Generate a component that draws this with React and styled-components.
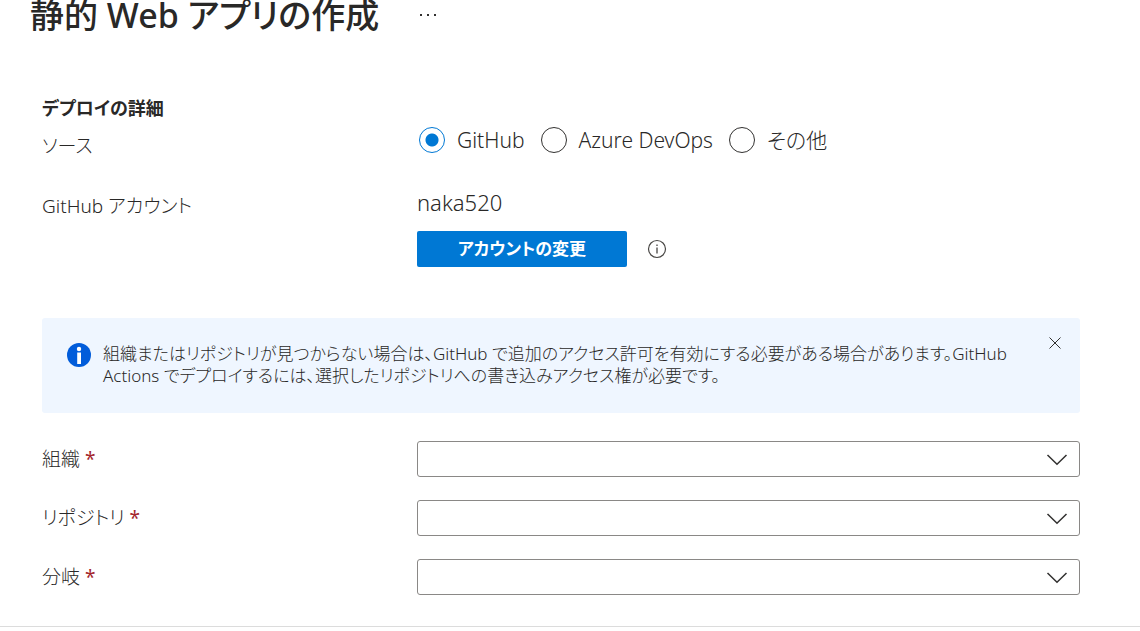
import React, { useState } from 'react';
import styled, { createGlobalStyle } from 'styled-components';

const GlobalStyle = createGlobalStyle`
  * {
    box-sizing: border-box;
  }

  body {
    margin: 0;
    background: #fff;
    color: #292827;
    font-family: "Noto Sans", "Noto Sans CJK JP", sans-serif;
    font-size: 19px;
    font-weight: 300;
    line-height: 28px;
    font-feature-settings: "palt";
  }

  button, select, input {
    font: inherit;
    font-feature-settings: inherit;
    color: inherit;
  }
`;

const Page = styled.main`
  overflow: hidden;
`;

const Header = styled.header`
  display: flex;
  align-items: flex-end;
  gap: 40px;
  height: 39px;
  padding-left: 30px;
`;

const Title = styled.h1`
  margin: 0;
  font-size: 34px;
  font-weight: 500;
  line-height: 48px;
`;

const MoreButton = styled.button`
  display: flex;
  align-items: center;
  height: 48px;
  padding: 0;
  border: 0;
  background: none;
  cursor: pointer;
`;

const Form = styled.form`
  padding: 55px 60px 31px 42px;
  border-bottom: 1px solid #dcdcdc;
`;

const SectionTitle = styled.h2`
  margin: 0;
  font-size: 18px;
  font-weight: 600;
  line-height: 28px;
`;

const Row = styled.div`
  display: grid;
  grid-template-columns: 375px 1fr;
  align-items: start;
`;

const SourceRow = styled(Row)`
  align-items: end;
  height: 42px;
`;

const AccountRow = styled(Row)`
  margin-top: 24px;
`;

const Label = styled.label`
  line-height: 36px;
`;

const RowLabel = styled.span`
  line-height: 36px;
`;

const RadioGroup = styled.div`
  display: flex;
  align-items: center;
  gap: 16px;
  padding: 0 2px 10px;
  font-size: 21px;
`;

const RadioOption = styled.label`
  display: flex;
  align-items: center;
  gap: 12px;
  cursor: pointer;
`;

const Radio = styled.input`
  appearance: none;
  width: 26px;
  height: 26px;
  margin: 0;
  border: 1px solid #323130;
  border-radius: 50%;
  cursor: pointer;

  &:checked {
    border-color: #0078d4;
    background: radial-gradient(circle, #0078d4 6px, transparent 7px);
  }
`;

const AccountName = styled.div`
  font-size: 22px;
`;

const AccountActions = styled.div`
  display: flex;
  align-items: center;
  gap: 20px;
  margin-top: 15px;
`;

const PrimaryButton = styled.button`
  width: 210px;
  height: 36px;
  padding: 0;
  border: 0;
  border-radius: 2px;
  background: #0078d4;
  color: #fff;
  font-size: 17px;
  font-weight: 600;
  cursor: pointer;
`;

const IconButton = styled.button`
  display: flex;
  padding: 0;
  border: 0;
  background: none;
  cursor: pointer;
`;

const MessageBar = styled.div`
  display: flex;
  align-items: flex-start;
  gap: 12px;
  margin-top: 51px;
  padding: 18px 18px 25px 25px;
  border-radius: 3px;
  background: #eff6ff;
`;

const MessageBody = styled.div`
  display: flex;
  flex: 1;
  gap: 12px;
  padding-top: 7px;

  svg {
    flex: none;
  }
`;

const MessageText = styled.p`
  flex: 1;
  min-height: 45px;
  margin: 0;
  padding-right: 20px;
  font-size: 17px;
  line-height: 22px;
`;

const Fields = styled.div`
  display: grid;
  gap: 23px;
  margin-top: 28px;
`;

const Required = styled.span`
  color: #a4262c;
  font-weight: 400;
`;

const SelectBox = styled.div`
  position: relative;

  svg {
    position: absolute;
    top: 12px;
    right: 12px;
    pointer-events: none;
  }
`;

const Select = styled.select`
  display: block;
  appearance: none;
  width: 100%;
  height: 36px;
  padding: 0 40px 0 12px;
  border: 1px solid #8a8886;
  border-radius: 3px;
  background: #fff;
`;

const sources = [
  { value: 'github', label: 'GitHub' },
  { value: 'devops', label: 'Azure DevOps' },
  { value: 'other', label: 'その他' },
];

const fields = [
  { id: 'organization', label: '組織' },
  { id: 'repository', label: 'リポジトリ' },
  { id: 'branch', label: '分岐' },
];

const MoreIcon = () => (
  <svg width="20" height="4" viewBox="0 0 20 4" fill="#323130">
    <rect x="1" y="1" width="2" height="2" />
    <rect x="8" y="1" width="2" height="2" />
    <rect x="15" y="1" width="2" height="2" />
  </svg>
);

const InfoOutlineIcon = () => (
  <svg width="20" height="20" viewBox="0 0 20 20" fill="none" stroke="#484644">
    <circle cx="10" cy="10" r="8.5" strokeWidth="1.2" />
    <path d="M10 8.5v6M10 5.5v1.5" strokeWidth="1.3" />
  </svg>
);

const InfoIcon = () => (
  <svg width="24" height="24" viewBox="0 0 24 24">
    <circle cx="12" cy="12" r="12" fill="#015cda" />
    <circle cx="12" cy="6" r="2.2" fill="#fff" />
    <rect x="10.2" y="9.5" width="3.8" height="11.5" fill="#fff" />
  </svg>
);

const CloseIcon = () => (
  <svg width="14" height="14" viewBox="0 0 14 14" fill="none" stroke="#323130">
    <path d="M1.5 1.5l11 11M12.5 1.5l-11 11" />
  </svg>
);

const ChevronIcon = () => (
  <svg width="22" height="13" viewBox="0 0 22 13" fill="none" stroke="#323130" strokeWidth="1.5">
    <path d="M1.5 2l9.5 9.3L20.5 2" />
  </svg>
);

const App = () => {
  const [source, setSource] = useState('github');
  const [showMessage, setShowMessage] = useState(true);

  return (
    <Page>
      <GlobalStyle />
      <Header>
        <Title>静的 Web アプリの作成</Title>
        <MoreButton type="button" aria-label="その他の操作" aria-haspopup="menu">
          <MoreIcon />
        </MoreButton>
      </Header>
      <Form onSubmit={(e) => e.preventDefault()}>
        <SectionTitle>デプロイの詳細</SectionTitle>
        <SourceRow>
          <RowLabel id="source-label">ソース</RowLabel>
          <RadioGroup role="radiogroup" aria-labelledby="source-label">
            {sources.map((item) => (
              <RadioOption key={item.value}>
                <Radio
                  type="radio"
                  name="source"
                  value={item.value}
                  checked={source === item.value}
                  onChange={() => setSource(item.value)}
                />
                {item.label}
              </RadioOption>
            ))}
          </RadioGroup>
        </SourceRow>
        <AccountRow>
          <RowLabel>GitHub アカウント</RowLabel>
          <div>
            <AccountName>naka520</AccountName>
            <AccountActions>
              <PrimaryButton type="button">アカウントの変更</PrimaryButton>
              <IconButton type="button" aria-label="情報">
                <InfoOutlineIcon />
              </IconButton>
            </AccountActions>
          </div>
        </AccountRow>
        {showMessage && (
          <MessageBar>
            <MessageBody>
              <InfoIcon />
              <MessageText>
                組織またはリポジトリが見つからない場合は、GitHub で追加のアクセス許可を有効にする必要がある場合があります。GitHub
                Actions でデプロイするには、選択したリポジトリへの書き込みアクセス権が必要です。
              </MessageText>
            </MessageBody>
            <IconButton type="button" aria-label="閉じる" onClick={() => setShowMessage(false)}>
              <CloseIcon />
            </IconButton>
          </MessageBar>
        )}
        <Fields>
          {fields.map((field) => (
            <Row key={field.id}>
              <Label htmlFor={field.id}>
                {field.label} <Required>*</Required>
              </Label>
              <SelectBox>
                <Select id={field.id} required />
                <ChevronIcon />
              </SelectBox>
            </Row>
          ))}
        </Fields>
      </Form>
    </Page>
  );
};

export default App;
